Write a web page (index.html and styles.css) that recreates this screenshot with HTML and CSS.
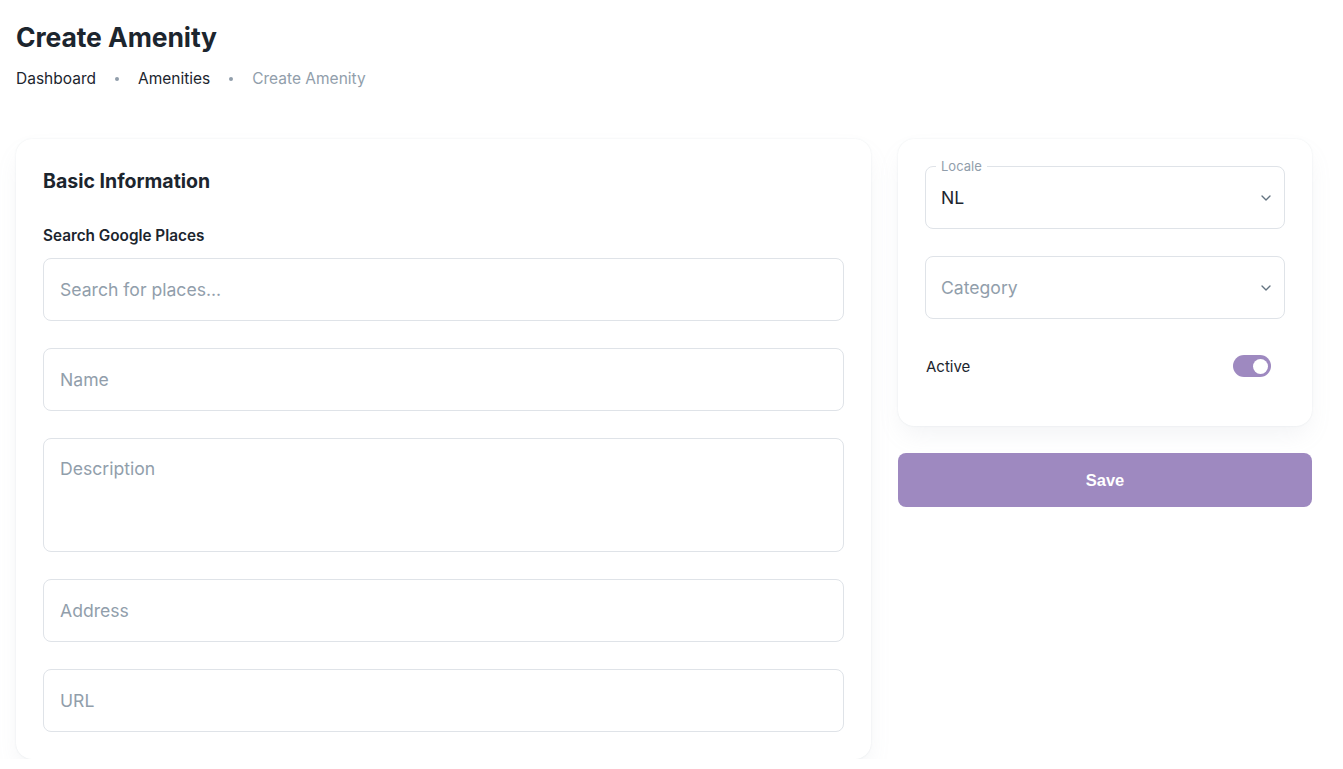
FILE: index.html
```html
<!DOCTYPE html>
<html lang="en">
<head>
    <meta charset="UTF-8">
    <meta name="viewport" content="width=device-width, initial-scale=1.0">
    <title>Create Amenity</title>
    <link rel="stylesheet" href="styles.css">
</head>
<body>
    <div class="page">
        <h1 class="title">Create Amenity</h1>
        <nav class="breadcrumbs">
            <a href="#">Dashboard</a>
            <span class="dot"></span>
            <a href="#">Amenities</a>
            <span class="dot"></span>
            <span class="current">Create Amenity</span>
        </nav>

        <div class="layout">
            <div class="card main">
                <h2 class="card-title">Basic Information</h2>
                <div class="field-group">
                    <label class="label">Search Google Places</label>
                    <input class="input" type="text" placeholder="Search for places...">
                </div>
                <input class="input" type="text" placeholder="Name">
                <textarea class="input textarea" placeholder="Description"></textarea>
                <input class="input" type="text" placeholder="Address">
                <input class="input" type="text" placeholder="URL">
            </div>

            <div class="side">
                <div class="card side-card">
                    <div class="select">
                        <span class="legend">Locale</span>
                        <span class="value">NL</span>
                        <svg class="chevron" width="14" height="14" viewBox="0 0 24 24"><path d="M6 9l6 6 6-6" fill="none" stroke="#637381" stroke-width="2" stroke-linecap="round" stroke-linejoin="round"/></svg>
                    </div>
                    <div class="select">
                        <span class="value placeholder">Category</span>
                        <svg class="chevron" width="14" height="14" viewBox="0 0 24 24"><path d="M6 9l6 6 6-6" fill="none" stroke="#637381" stroke-width="2" stroke-linecap="round" stroke-linejoin="round"/></svg>
                    </div>
                    <div class="switch-row">
                        <span>Active</span>
                        <span class="switch"><span class="knob"></span></span>
                    </div>
                </div>
                <button class="save">Save</button>
            </div>
        </div>
    </div>
</body>
</html>
```

FILE: styles.css
```css
body {
    margin: 0;
    font-family: Inter, "Noto Sans", sans-serif;
    color: #1c252e;
    background-color: #fff;
}
.page {
    padding: 18px 16px 0 16px;
}
.title {
    margin: 0;
    font-size: 26.5px;
    font-weight: 700;
    line-height: 38px;
    letter-spacing: -0.1px;
}
.breadcrumbs {
    display: flex;
    align-items: center;
    gap: 19px;
    margin-top: 13px;
    font-size: 15.5px;
    line-height: 20px;
}
.breadcrumbs a {
    color: #1c252e;
    text-decoration: none;
}
.breadcrumbs .current {
    color: #919eab;
}
.dot {
    width: 4px;
    height: 4px;
    border-radius: 50%;
    background-color: #919eab;
}
.layout {
    display: flex;
    align-items: flex-start;
    gap: 27px;
    margin-top: 50px;
}
.card {
    background-color: #fff;
    border-radius: 16px;
    box-shadow: 0 0 2px rgba(145, 158, 171, 0.2), 0 12px 24px -4px rgba(145, 158, 171, 0.12);
    padding: 27px;
    box-sizing: border-box;
}
.main {
    width: 855px;
    display: flex;
    flex-direction: column;
    gap: 27px;
    padding-top: 29px;
}
.card-title {
    margin: 0;
    font-size: 19.5px;
    font-weight: 700;
    line-height: 26px;
}
.field-group {
    display: flex;
    flex-direction: column;
    gap: 11px;
    margin-top: 4px;
}
.label {
    font-size: 15.3px;
    font-weight: 600;
    line-height: 22px;
}
.input {
    height: 63px;
    box-sizing: border-box;
    border: 1px solid #dfe3e8;
    border-radius: 8px;
    padding: 0 16px;
    font-family: inherit;
    font-size: 17.6px;
    color: #1c252e;
    outline: none;
}
.input::placeholder {
    color: #919eab;
}
.textarea {
    height: 114px;
    padding-top: 19px;
    resize: none;
}
.side {
    width: 414px;
    display: flex;
    flex-direction: column;
    gap: 27px;
}
.side-card {
    display: flex;
    flex-direction: column;
    gap: 27px;
    padding-bottom: 49px;
}
.select {
    position: relative;
    height: 63px;
    box-sizing: border-box;
    border: 1px solid #dfe3e8;
    border-radius: 8px;
    padding: 0 16px 0 15px;
    display: flex;
    align-items: center;
    justify-content: space-between;
    font-size: 17.6px;
}
.select .placeholder {
    color: #919eab;
}
.legend {
    position: absolute;
    top: -8px;
    left: 10px;
    padding: 0 5px;
    background-color: #fff;
    font-size: 13px;
    line-height: 14px;
    color: #919eab;
}
.chevron {
    margin-right: -6px;
    width: 16px;
    height: 16px;
}
.switch-row {
    display: flex;
    align-items: center;
    justify-content: space-between;
    font-size: 15px;
    padding: 0 14px 0 1px;
    margin-top: 9px;
}
.switch {
    width: 38px;
    height: 22px;
    border-radius: 11px;
    background-color: #9e89c0;
    display: flex;
    align-items: center;
    justify-content: flex-end;
    padding: 0 3px;
    box-sizing: border-box;
}
.knob {
    width: 15px;
    height: 15px;
    border-radius: 50%;
    background-color: #fff;
}
.save {
    height: 54px;
    border: none;
    border-radius: 8px;
    background-color: #9e89c0;
    color: #fff;
    font-family: "Liberation Sans", Arial, sans-serif;
    font-size: 16.5px;
    font-weight: 700;
    cursor: pointer;
}
```
